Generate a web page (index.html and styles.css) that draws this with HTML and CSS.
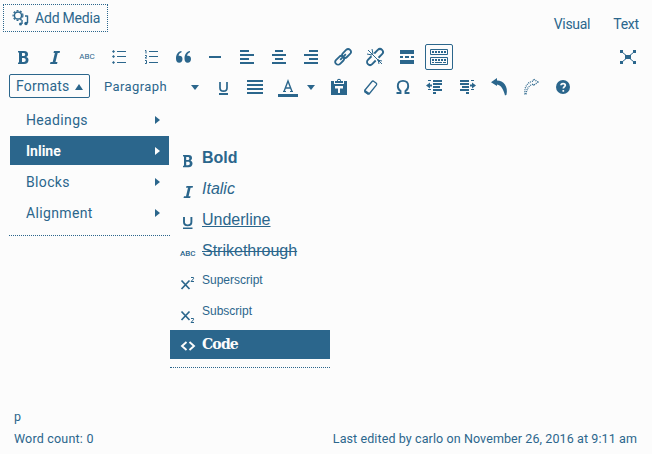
FILE: index.html
```html
<!DOCTYPE html>
<html lang="en">
<head>
<meta charset="utf-8">
<title>Editor</title>
<link rel="stylesheet" href="styles.css">
</head>
<body>
<div class="editor">
  <header class="top">
    <button class="media">
      <svg class="media-icon" viewBox="0 0 18 18"><circle cx="6" cy="6.500" r="3.600" fill="none" stroke="currentColor" stroke-width="1.500"/><circle cx="6" cy="6.500" r="4.900" fill="none" stroke="currentColor" stroke-width="1.200" stroke-dasharray="2 1.500"/><path d="M15.500 6.500v7.500M15.500 7h-2.500M10 11v4" fill="none" stroke="currentColor" stroke-width="1.400"/><circle cx="8.500" cy="15" r="1.500"/><circle cx="14" cy="14.500" r="1.700"/></svg>
      <span class="media-label">Add Media</span>
    </button>
    <nav class="tabs"><span class="tab-visual">Visual</span><span class="tab-text">Text</span></nav>
  </header>

  <div class="row row-one">
    <span class="tool"><svg viewBox="0 0 20 20"><path fill-rule="evenodd" d="M5 4h6c3 0 4 1.300 4 3.200 0 1.300-.6 2.200-1.800 2.700 1.500.4 2.300 1.500 2.300 3 0 2.300-1.500 4.100-4.500 4.100H5v-1.500h1v-10H5zM9 6v3h1.500c1.200 0 1.700-.6 1.700-1.500S11.700 6 10.500 6zM9 11v4h1.700c1.300 0 2-.7 2-2s-.7-2-2-2z"/></svg></span>
    <span class="tool"><svg viewBox="0 0 20 20"><path d="M9 4h6l-.4 2h-1.900l-2.200 9h2l-.5 2H5l.5-2h2.200l2.200-9H8.500z"/></svg></span>
    <span class="tool abc">ABC</span>
    <span class="tool"><svg viewBox="0 0 20 20"><path d="M8 4h9v1H8zM8 9h9v1H8zM8 15h9v1H8zM4.500 3L6 4.500 4.500 6 3 4.500zM4.500 8L6 9.500 4.500 11 3 9.500zM4.500 14L6 15.500 4.500 17 3 15.500z"/></svg></span>
    <span class="tool"><svg viewBox="0 0 20 20"><path d="M8 4h9v1H8zM8 9h9v1H8zM8 15h9v1H8z"/><path d="M4 3.500h1v3M4 8.500h1.500v1.200L4 11h2M4 13.500h1.500v3H4" fill="none" stroke="currentColor"/></svg></span>
    <span class="tool"><svg viewBox="0 0 20 20"><path d="M8.500 4v1.300C6.500 6 5.700 7.300 5.700 9c2-.6 3.800.8 3.800 3 0 2-1.300 3.800-3.300 3.800C3.900 15.800 3 14 3 11.500 3 7.500 5 4.500 8.500 4zM17 4v1.300c-2 .7-2.800 2-2.800 3.700 2-.6 3.800.8 3.800 3 0 2-1.300 3.800-3.300 3.800-2.300 0-3.200-1.800-3.200-4.300 0-4 2-7 5.500-7.500z"/></svg></span>
    <span class="tool"><svg viewBox="0 0 20 20"><path d="M4 9h12v2H4z"/></svg></span>
    <span class="tool"><svg viewBox="0 0 20 20"><path d="M3 3h9v2H3zM3 7h14v2H3zM3 11h9v2H3zM3 15h14v2H3z"/></svg></span>
    <span class="tool"><svg viewBox="0 0 20 20"><path d="M6 3h8v2H6zM3 7h14v2H3zM6 11h8v2H6zM3 15h14v2H3z"/></svg></span>
    <span class="tool"><svg viewBox="0 0 20 20"><path d="M8 3h9v2H8zM3 7h14v2H3zM8 11h9v2H8zM3 15h14v2H3z"/></svg></span>
    <span class="tool"><svg viewBox="0 0 20 20"><g fill="none" stroke="currentColor" stroke-width="1.800" transform="rotate(-45 10 10)"><rect x=".3" y="7.200" width="10" height="5.600" rx="2.800"/><rect x="10" y="7.200" width="10" height="5.600" rx="2.800"/><path d="M6 10h8"/></g></svg></span>
    <span class="tool"><svg viewBox="0 0 20 20"><g fill="none" stroke="currentColor" stroke-width="1.900" transform="rotate(-45 10 10)"><path d="M8 7H3a3 3 0 0 0 0 6h5M12 7h5a3 3 0 0 1 0 6h-5"/></g><path d="M3 3l14 14M2 7l5 1M7 2l1 5M13 12l1 5M12 13l5 1" fill="none" stroke="currentColor"/></svg></span>
    <span class="tool"><svg viewBox="0 0 20 20"><path d="M3 3h14v4H3zM3 9h3v2H3zM8 9h4v2H8zM14 9h3v2h-3zM3 13h14v4H3z"/></svg></span>
    <span class="tool"><span class="pressed"><svg viewBox="0 0 20 20"><path fill="none" stroke="currentColor" d="M1.500 2.500h17v5h-17zM1.500 10.500h17v7h-17z"/><path fill="none" stroke="currentColor" stroke-width="2" stroke-dasharray="2 1" d="M3 5h14M3 13h14"/><path d="M3 15h2v1H3zM6 15h7v1H6zM14 15h3v1h-3z"/></svg></span></span>
    <span class="tool expand"><svg viewBox="0 0 20 20"><path d="M7 8h6v4H7zM2 3h3v3H2zM15 3h3v3h-3zM2 14h3v3H2zM15 14h3v3h-3z"/><path d="M4 5l12 10M16 5L4 15" stroke="currentColor"/></svg></span>
  </div>

  <div class="row row-two">
    <button class="formats"><span>Formats</span><i class="tri-up"></i></button>
    <span class="paragraph">Paragraph</span>
    <i class="tri-down para-caret"></i>
    <span class="tool"><svg viewBox="0 0 20 20"><path d="M7 5v6c0 2.300 1 3.200 3.500 3.200S14 13.300 14 11V5" fill="none" stroke="currentColor" stroke-width="1.700"/><path d="M6 16h9v2H6z"/></svg></span>
    <span class="tool"><svg viewBox="0 0 20 20"><path d="M2 3h16v2H2zM2 7h16v2H2zM2 11h16v2H2zM2 15h16v2H2z"/></svg></span>
    <span class="tool color"><svg viewBox="0 0 20 20"><path d="M6 14.500L10 4l4 10.500M7 11h6" fill="none" stroke="currentColor" stroke-width="1.400"/><path d="M5 14h3v1H5zM12 14h3v1h-3zM0 17h20v3H0z"/></svg></span>
    <i class="tri-down color-caret"></i>
    <span class="tool"><svg viewBox="0 0 20 20"><path fill-rule="evenodd" d="M2 4h3v3h10V4h3v14H2zM6 9v2.500h3V16h2v-4.500h3V9zM6 6V4h2c0-3 4-3 4 0h2v2zM9 3v1h2V3z"/></svg></span>
    <span class="tool"><svg viewBox="0 0 20 20"><path d="M4 13l7-8.500c.6-.7 1.400-.5 2 0l2.300 1.700c.6.600.6 1.200 0 2L8.500 16.500c-.6.8-1.300.8-2 .2l-2.300-1.600c-.7-.7-.8-1.300-.2-2.100z" fill="none" stroke="currentColor" stroke-width="1.300"/><path d="M3.500 12.500l5 3.500-1.500 1.500-3.500-2z"/></svg></span>
    <span class="tool"><svg viewBox="0 0 20 20"><path d="M3.500 16h4v-2C5.500 12.800 4.800 11 4.800 9c0-3 2-5.100 5.200-5.100s5.200 2.100 5.200 5.100c0 2-.7 3.800-2.700 5v2h4" fill="none" stroke="currentColor" stroke-width="1.900"/></svg></span>
    <span class="tool"><svg viewBox="0 0 20 20"><path d="M3 3h3v1H3zM8 3h9v2H8zM8 6h9v2H8zM8 9h7v2H8zM3 12h3v1H3zM8 12h9v2H8zM8 15h3v2H8zM1 8.500l4-3v2h2v2H5v2z"/></svg></span>
    <span class="tool"><svg viewBox="0 0 20 20"><path d="M3 3h9v2H3zM14 3h3v1h-3zM3 6h9v2H3zM5 9h7v2H5zM3 12h9v2H3zM14 12h3v1h-3zM9 15h3v2H9zM19 8.500l-4-3v2h-2v2h2v2z"/></svg></span>
    <span class="tool"><svg viewBox="0 0 20 20"><path d="M2 5.300L8 1v2.500c6.500 0 11.500 6 9.500 14.300l-1.500.7C14.500 12.500 12.500 8.500 8 7.500V9z"/></svg></span>
    <span class="tool"><svg viewBox="0 0 20 20"><path d="M17 5l-4.500-3v2C6.500 5 3 10 4 17l1 .5C5.500 12 8 8 12.500 7v1.500z" fill="none" stroke="currentColor" stroke-width="1.300" stroke-dasharray="1 1"/></svg></span>
    <span class="tool"><svg viewBox="0 0 20 20"><circle cx="10" cy="10" r="7"/><path d="M8 8.300C8 6 12.300 6 12.300 8.300c0 1.500-2 1.500-2 3.300M10.300 13v1.700" fill="none" stroke="#fcfcfc" stroke-width="1.700"/></svg></span>
  </div>

  <main class="canvas"></main>
  <footer class="status">
    <div class="path">p</div>
    <div class="counts"><span class="words">Word count: 0</span><span class="edited">Last edited by carlo on November 26, 2016 at 9:11 am</span></div>
  </footer>

  <div class="menu">
    <div class="item"><span>Headings</span><i class="tri-right"></i></div>
    <div class="item active"><span class="inline-label">Inline</span><i class="tri-right"></i></div>
    <div class="item"><span>Blocks</span><i class="tri-right"></i></div>
    <div class="item"><span>Alignment</span><i class="tri-right"></i></div>
  </div>
  <div class="menu submenu">
    <div class="sub"><svg viewBox="0 0 16 16"><path fill-rule="evenodd" d="M3 2h5.500c2.500 0 3.500 1.200 3.500 3 0 1.200-.6 2-1.500 2.500 1.200.5 2 1.500 2 3 0 2.300-1.500 3.700-4 3.700H3v-1.500h1V3.500H3zM6.200 4v3h1.600c1.100 0 1.600-.6 1.600-1.500S8.900 4 7.800 4zM6.200 8.800v3.400H8c1.200 0 1.800-.6 1.800-1.700S9.200 8.800 8 8.800z"/></svg><span class="label bold">Bold</span></div>
    <div class="sub"><svg viewBox="0 0 16 16"><path d="M6.500 2H13l-.4 1.700h-2l-2 8.600h2l-.5 1.700H3.500l.5-1.700h2l2-8.600H6z"/></svg><span class="label italic">Italic</span></div>
    <div class="sub"><svg viewBox="0 0 16 16"><path d="M4 2v5c0 2.200 1.200 3.400 3.700 3.400s3.700-1.200 3.700-3.400V2" fill="none" stroke="currentColor" stroke-width="1.900"/><path d="M3 12.500h9.500V14H3z"/></svg><span class="label under">Underline</span></div>
    <div class="sub"><span class="abc mini">ABC</span><span class="label strike">Strikethrough</span></div>
    <div class="sub"><svg viewBox="0 0 16 16"><path d="M1.500 3.500l8 8.500M9.500 3.500l-8 8.500" fill="none" stroke="currentColor" stroke-width="1.700"/><path d="M11 .5h2.500v1.200L11 4.500h3" fill="none" stroke="currentColor"/></svg><span class="label small">Superscript</span></div>
    <div class="sub"><svg viewBox="0 0 16 16"><path d="M1.500 3.500l8 8.500M9.500 3.500l-8 8.500" fill="none" stroke="currentColor" stroke-width="1.700"/><path d="M11 10.500h2.500v1.200L11 14.500h3" fill="none" stroke="currentColor"/></svg><span class="label small">Subscript</span></div>
    <div class="sub active"><svg viewBox="0 0 16 16"><path d="M6.500 3l-4.500 4 4.500 4M9.500 3l4.500 4-4.500 4" fill="none" stroke="currentColor" stroke-width="1.900"/></svg><span class="label code">Code</span></div>
  </div>
</div>
</body>
</html>
```

FILE: styles.css
```css
* { box-sizing: border-box; }
body { margin: 0; background: #fcfcfc; color: #2b668c; font: 14px/18px Roboto, sans-serif; }
button { font: inherit; color: inherit; background: none; padding: 0; }
svg { display: block; fill: currentColor; flex: none; width: 20px; height: 20px; }
.editor { position: relative; display: flex; flex-direction: column; width: 652px; height: 454px; overflow: hidden; }
.top { display: flex; justify-content: space-between; height: 42px; padding: 4px 13px 0 3px; }
.media { display: flex; align-items: center; gap: 5px; width: 105px; height: 28px; padding-left: 8px; border: 1px dotted currentColor; }
.media-icon { width: 18px; height: 18px; }
.media-label { white-space: nowrap; letter-spacing: -.2px; }
.tabs { display: flex; gap: 23px; padding-top: 11px; }
.tab-visual { letter-spacing: -.3px; }
.tab-text { letter-spacing: -.2px; }
.row { display: flex; align-items: center; height: 30px; }
.row-one { padding-left: 7px; }
.row-two { padding-left: 9px; }
.tool { display: flex; justify-content: center; align-items: center; flex: none; width: 32px; height: 30px; }
.color { padding-left: 1px; }
.expand { margin-left: 157px; }
.abc { font: 8px/10px Roboto, sans-serif; }
.pressed { display: flex; justify-content: center; align-items: center; flex: none; width: 28px; height: 26px; border: 1px solid currentColor; border-radius: 2px; }
.formats { display: flex; align-items: center; gap: 6px; width: 81px; height: 24px; margin-top: -3px; padding-left: 6px; border: 1px solid currentColor; border-radius: 2px; letter-spacing: .2px; }
.tri-up { border: 4px solid transparent; border-top: 0; border-bottom: 6px solid currentColor; margin-top: 2px; }
.tri-down { flex: none; width: 8px; border: 4px solid transparent; border-bottom: 0; border-top: 5px solid currentColor; }
.tri-right { border: 4px solid transparent; border-right: 0; border-left: 5px solid currentColor; }
.paragraph { width: 87px; margin-left: 14px; font-size: 13px; letter-spacing: .4px; }
.para-caret { margin-right: 8px; }
.color-caret { margin: 0 8px 0 4px; }
.canvas { flex: 1; }
.status { height: 48px; padding: 3px 15px 0 14px; font-size: 12.5px; line-height: 16px; }
.counts { display: flex; justify-content: space-between; margin-top: 6px; }
.words { letter-spacing: .2px; }
.edited { letter-spacing: .1px; }
.menu { position: absolute; left: 9px; top: 105px; display: flex; flex-direction: column; gap: 2px; width: 161px; height: 131px; padding-left: 1px; border-bottom: 1px dotted currentColor; }
.item { display: flex; justify-content: space-between; align-items: center; width: 159px; height: 29px; padding: 0 9px 0 16px; letter-spacing: .35px; }
.active { background: #2b668c; color: #fcfcfc; }
.inline-label { font-weight: 700; letter-spacing: 0; }
.submenu { left: 170px; top: 144px; width: 160px; height: 224px; padding-left: 0; }
.sub { display: flex; align-items: center; flex: none; height: 29px; padding-left: 10px; }
.sub svg { width: 16px; height: 16px; margin: 4px 6px 0 0; }
.mini { width: 16px; margin: 4px 6px 0 0; font-weight: 500; }
.label { margin-top: -2px; white-space: nowrap; font: 16px/20px "Liberation Sans", sans-serif; }
.bold { font-weight: 700; }
.italic { font-style: italic; }
.under { text-decoration: underline; }
.strike { text-decoration: line-through; }
.small { margin-top: -5px; font-size: 12px; }
.code { font: 700 14px/20px "DejaVu Serif", serif; letter-spacing: -.8px; }
```
